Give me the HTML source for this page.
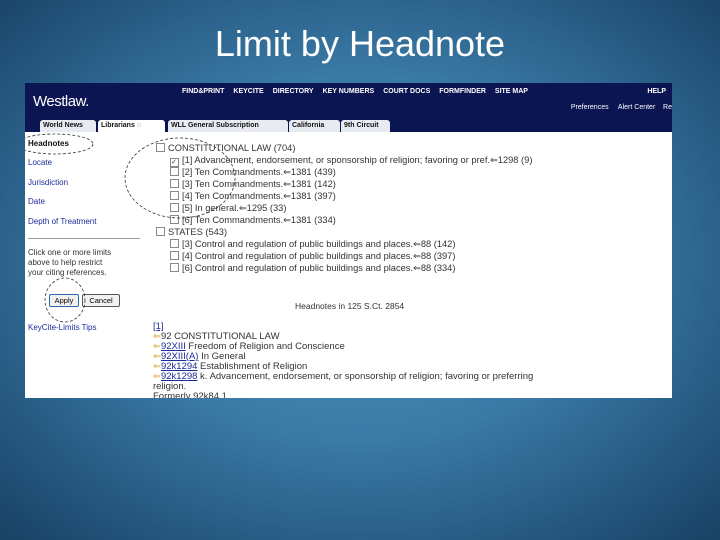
<!DOCTYPE html>
<html><head><style>
body{margin:0;width:720px;height:540px;overflow:hidden;background:radial-gradient(ellipse 75% 75% at 50% 48%,#4e94bf 0%,#3a7aa6 45%,#1f4d73 85%,#173d5e 100%);font-family:"Liberation Sans",sans-serif;position:relative}
.title{position:absolute;top:23px;left:0;width:720px;text-align:center;color:#fff;font-size:36px}
.shot{position:absolute;left:25px;top:83px;width:647px;height:315px;background:#fff;overflow:hidden}
.hdr{position:absolute;left:0;top:0;width:647px;height:36px;background:#0b1552}
.logo{position:absolute;left:8px;top:10px;color:#fff;font-size:15px;letter-spacing:-0.5px}
.nav{position:absolute;top:5px;left:157px;color:#fff;font-size:7px;font-weight:bold;white-space:nowrap}
.nav span{margin-right:9px}
.sub{position:absolute;top:21px;right:0;color:#fff;font-size:7px;white-space:nowrap}
.tabs{position:absolute;left:0;top:36px;width:647px;height:13px;background:#0b1552}
.tab{position:absolute;top:1px;height:12px;background:#e8ebf2;font-size:7px;font-weight:bold;color:#111;line-height:12px;padding-left:3px;box-sizing:border-box;white-space:nowrap;overflow:hidden;border-radius:3px 3px 0 0}
.left{position:absolute;left:3px;font-size:8px;color:#1a2d9a}
.ln{position:absolute;font-size:9.3px;color:#333;white-space:nowrap}
.cb{display:inline-block;width:7px;height:7px;border:1px solid #888;margin-right:3px;vertical-align:-1px;background:#fff;font-size:7px;line-height:7px}
.link{color:#1a2d9a;text-decoration:underline}
.arr{color:#d8a52a}
.btn{position:absolute;top:211px;height:11px;border:1px solid #555;border-radius:2px;font-size:7.5px;line-height:11px;text-align:center;background:#f2f2f2}
</style></head><body>
<div class="title">Limit by Headnote</div>
<div class="shot">
 <div class="hdr">
  <div class="logo">Westlaw.</div>
  <div class="nav"><span>FIND&amp;PRINT</span><span>KEYCITE</span><span>DIRECTORY</span><span>KEY NUMBERS</span><span>COURT DOCS</span><span>FORMFINDER</span><span>SITE MAP</span></div>
  <div style="position:absolute;right:6px;top:5px;color:#fff;font-size:7px;font-weight:bold">HELP</div>
  <div class="sub">Preferences &nbsp;&nbsp;&nbsp; Alert Center &nbsp;&nbsp; Re</div>
 </div>
 <div class="tabs">
  <div class="tab" style="left:15px;width:56px">World News</div>
  <div class="tab" style="left:73px;width:67px;background:#fff">Librarians ◌</div>
  <div class="tab" style="left:143px;width:120px">WLL General Subscription</div>
  <div class="tab" style="left:264px;width:51px">California</div>
  <div class="tab" style="left:316px;width:49px">9th Circuit</div>
 </div>
 <div class="left" style="top:56px;color:#111;font-weight:bold">Headnotes</div>
 <div class="left" style="top:75px">Locate</div>
 <div class="left" style="top:95px">Jurisdiction</div>
 <div class="left" style="top:114px">Date</div>
 <div class="left" style="top:134px">Depth of Treatment</div>
 <div style="position:absolute;left:3px;top:155px;width:112px;border-top:1px solid #999"></div>
 <div class="left" style="top:165px;color:#333;line-height:10px">Click one or more limits<br>above to help restrict<br>your citing references.</div>
 <div class="btn" style="left:24px;width:28px;border-color:#2a6ab0">Apply</div>
 <div class="btn" style="left:57px;width:36px">Cancel</div>
 <div class="left" style="top:240px">KeyCite-Limits Tips</div>
 <div class="ln" style="left:131px;top:60px"><span class="cb"></span>CONSTITUTIONAL LAW (704)</div>
 <div class="ln" style="left:145px;top:72px"><span class="cb">✓</span>[1] Advancement, endorsement, or sponsorship of religion; favoring or pref.⇐1298 (9)</div>
 <div class="ln" style="left:145px;top:84px"><span class="cb"></span>[2] Ten Commandments.⇐1381 (439)</div>
 <div class="ln" style="left:145px;top:96px"><span class="cb"></span>[3] Ten Commandments.⇐1381 (142)</div>
 <div class="ln" style="left:145px;top:108px"><span class="cb"></span>[4] Ten Commandments.⇐1381 (397)</div>
 <div class="ln" style="left:145px;top:120px"><span class="cb"></span>[5] In general.⇐1295 (33)</div>
 <div class="ln" style="left:145px;top:132px"><span class="cb"></span>[6] Ten Commandments.⇐1381 (334)</div>
 <div class="ln" style="left:131px;top:144px"><span class="cb"></span>STATES (543)</div>
 <div class="ln" style="left:145px;top:156px"><span class="cb"></span>[3] Control and regulation of public buildings and places.⇐88 (142)</div>
 <div class="ln" style="left:145px;top:168px"><span class="cb"></span>[4] Control and regulation of public buildings and places.⇐88 (397)</div>
 <div class="ln" style="left:145px;top:180px"><span class="cb"></span>[6] Control and regulation of public buildings and places.⇐88 (334)</div>
 <div class="ln" style="left:270px;top:218px;font-size:8.5px">Headnotes in 125 S.Ct. 2854</div>
 <div class="ln" style="left:128px;top:239px;line-height:10px;font-size:9.5px">
  <span class="link">[1]</span><br>
  <span class="arr">⇐</span>92 CONSTITUTIONAL LAW<br>
  <span class="arr">⇐</span><span class="link">92XIII</span> Freedom of Religion and Conscience<br>
  <span class="arr">⇐</span><span class="link">92XIII(A)</span> In General<br>
  <span class="arr">⇐</span><span class="link">92k1294</span> Establishment of Religion<br>
  <span class="arr">⇐</span><span class="link">92k1298</span> k. Advancement, endorsement, or sponsorship of religion; favoring or preferring<br>
  religion.<br>Formerly 92k84.1
 </div>
 <svg style="position:absolute;left:0;top:0" width="647" height="315">
  <g fill="none" stroke="#333" stroke-width="0.8" stroke-dasharray="3,2">
   <ellipse cx="30" cy="61" rx="38" ry="10"/>
   <ellipse cx="155" cy="95" rx="55" ry="40"/>
   <ellipse cx="40" cy="217" rx="20" ry="22"/>
  </g>
 </svg>
</div>
</body></html>
